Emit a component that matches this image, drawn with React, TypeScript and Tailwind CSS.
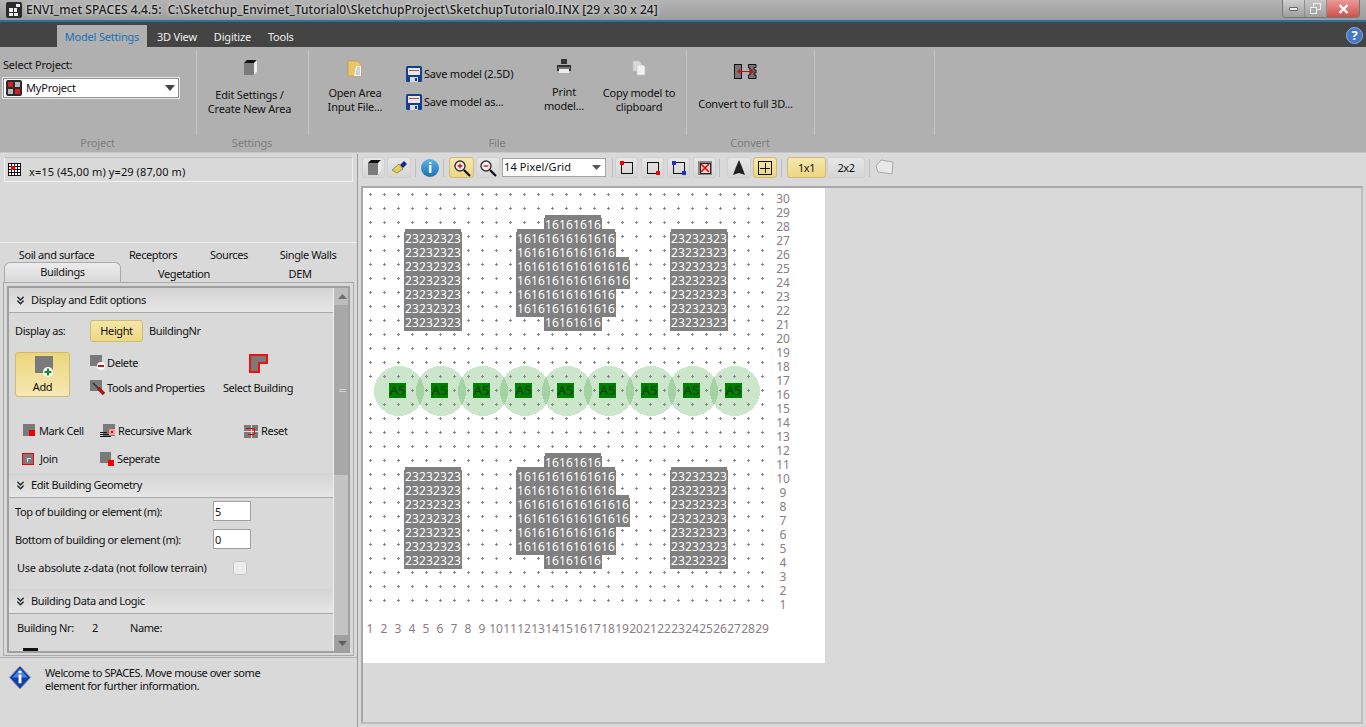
import { ChevronsDown } from "lucide-react";
import { ReactNode } from "react";
import clsx from "clsx";

const FONT = "font-['Noto_Sans',sans-serif]";

// --- little icons ---
const AppLogo = () => (
  <svg width="16" height="16" viewBox="0 0 16 16" className="shrink-0">
    <rect width="16" height="16" rx="2" fill="#2b2b2b" />
    <rect x="3" y="6" width="4" height="4" fill="#eee" />
    <rect x="3" y="11" width="4" height="3" fill="#eee" />
    <rect x="8" y="11" width="4" height="3" fill="#eee" />
    <rect x="8" y="6" width="3" height="4" fill="#eee" />
    <rect x="10" y="2" width="4" height="3" fill="#eee" />
  </svg>
);

const ProjectIcon = () => (
  <svg width="16" height="16" viewBox="0 0 16 16" className="shrink-0">
    <rect width="16" height="16" rx="2" fill="#2b2b2b" />
    <rect x="2" y="2" width="5" height="5" fill="#d62020" />
    <rect x="9" y="2" width="5" height="5" fill="#bbb" />
    <rect x="2" y="9" width="5" height="5" fill="#bbb" />
    <rect x="9" y="9" width="5" height="5" fill="#d62020" />
  </svg>
);

const BoxIcon = ({ size = 16 }: { size?: number }) => (
  <svg width={size} height={size} viewBox="0 0 16 16">
    <path d="M2 3 L5 0 H15 V12 L12 15 H2 Z" fill="#7b7b7b" />
    <path d="M2 3 L5 0 H15 L12 3 Z" fill="#111" />
    <path d="M12 3 L15 0 V12 L12 15 Z" fill="#eee" />
  </svg>
);

const Floppy = () => (
  <svg width="16" height="16" viewBox="0 0 16 16" className="shrink-0">
    <rect width="16" height="16" rx="1.5" fill="#123f8f" />
    <rect x="2" y="2" width="12" height="7" fill="#e8e8e8" />
    <rect x="3" y="4" width="10" height="1" fill="#c05050" />
    <rect x="4" y="11" width="8" height="5" fill="#d8d8d8" />
    <rect x="9" y="12" width="2" height="3" fill="#123f8f" />
  </svg>
);

const FolderDoc = () => (
  <svg width="16" height="18" viewBox="0 0 16 18">
    <path d="M1 2 H10 L14 5 V17 H1 Z" fill="#e9c468" stroke="#b8963e" strokeWidth="0.6" />
    <path d="M9 7 H14 V17 H7 Z" fill="#f3f3f3" />
    <path d="M10 9 H13 M9.5 11 H13 M9 13 H13 M8.5 15 H13" stroke="#999" strokeWidth="0.8" />
  </svg>
);

const Printer = () => (
  <svg width="16" height="16" viewBox="0 0 16 16">
    <path d="M5 1 H11 V6 H5 Z" fill="#333" />
    <path d="M1 7 H15 V13 H1 Z" fill="#333" />
    <rect x="2" y="9" width="12" height="2" fill="#777" />
    <rect x="3" y="11" width="10" height="4" fill="#eee" />
  </svg>
);

const CopyIcon = () => (
  <svg width="14" height="16" viewBox="0 0 14 16">
    <path d="M1 1 H7 L9 3 V11 H1 Z" fill="#d8d8d8" stroke="#c4c4c4" strokeWidth="0.6" />
    <path d="M5 5 H11 L13 7 V15 H5 Z" fill="#f1f1f1" stroke="#c8c8c8" strokeWidth="0.6" />
  </svg>
);

const ConvertIcon = () => (
  <svg width="23" height="15" viewBox="0 0 23 15">
    <rect x="0.5" y="0.5" width="7" height="14" fill="#777" stroke="#111" />
    <path d="M14.5 0.5 H22 V3.5 H20 V6 H22 V9 H20 V11 H22 V14.5 H14.5 V11 H16 V4 H14.5 Z" fill="#777" stroke="#111" />
    <path d="M4 7.5 H19 M6 5.5 L4 7.5 L6 9.5 M17 5.5 L19 7.5 L17 9.5" stroke="#e00000" strokeWidth="1.1" fill="none" />
  </svg>
);

const GridIcon = () => (
  <svg width="13" height="13" viewBox="0 0 13 13" shapeRendering="crispEdges" className="shrink-0">
    <rect x="0" y="0" width="13" height="13" fill="#fff" />
    <path d="M0.5 0 V13 M3.5 0 V13 M6.5 0 V13 M9.5 0 V13 M12.5 0 V13 M0 0.5 H13 M0 3.5 H13 M0 6.5 H13 M0 9.5 H13 M0 12.5 H13" stroke="#111" />
    <rect x="3" y="3" width="4" height="4" fill="#f00000" />
  </svg>
);

const InfoDiamond = () => (
  <svg width="24" height="25" viewBox="0 0 24 26" className="shrink-0">
    <path d="M12 1 L23 13 L12 25 L1 13 Z" fill="#1040b0" stroke="#9a9a9a" />
    <path d="M12 4 L20 13 L12 13 L4 13 Z" fill="#4a80e0" />
    <rect x="10.5" y="10" width="3" height="9" fill="#fff" />
    <rect x="10.5" y="6" width="3" height="2.5" fill="#fff" />
  </svg>
);

const GrayCell = ({ children }: { children?: ReactNode }) => (
  <svg width="17" height="17" viewBox="0 0 17 17" className="shrink-0" shapeRendering="crispEdges">
    <rect x="1" y="1" width="12" height="12" fill="#7a7a7a" />
    {children}
  </svg>
);

function Magnifier({ sign }: { sign: "+" | "-" }) {
  return (
    <svg width="18" height="18" viewBox="0 0 18 18">
      <circle cx="7" cy="7" r="5" fill="#f2f2f2" stroke="#333" strokeWidth="1.4" />
      <path d="M11 11 L17 17" stroke="#111" strokeWidth="2.2" />
      <path d={sign === "+" ? "M4.5 7 H9.5 M7 4.5 V9.5" : "M4.5 7 H9.5"} stroke="#d01010" strokeWidth="1.3" />
    </svg>
  );
}

// --- toolbar bits ---
function TbBtn({ w, active, children }: { w: string; active?: boolean; children?: ReactNode }) {
  return (
    <div
      className={clsx(
        "h-[21px] flex items-center justify-center rounded-[3px] border shrink-0",
        w,
        active
          ? "border-[#cdbb7c] bg-linear-to-b from-[#f6e7ad] to-[#ecd77f]"
          : "border-[#cfcfcf] bg-linear-to-b from-[#e6e6e6] to-[#d6d6d6]"
      )}
    >
      {children}
    </div>
  );
}

const TbSep = ({ cls }: { cls: string }) => <div className={clsx("w-px h-[18px] bg-[#bdbdbd] shrink-0", cls)} />;

const SquareCorner = ({ c1, c2, x, y }: { c1: string; c2?: string; x: number; y: number }) => (
  <svg width="14" height="14" viewBox="0 0 14 14" shapeRendering="crispEdges">
    <rect x="1.5" y="1.5" width="11" height="11" fill="none" stroke="#111" />
    <rect x={x} y={y} width="4" height="4" fill={c1} />
    {c2 && <rect x={10} y={10} width="4" height="4" fill={c2} />}
  </svg>
);

function RibbonGroup({ w, label, children }: { w: string; label?: string; children?: ReactNode }) {
  return (
    <div className={clsx("flex flex-col shrink-0", w)}>
      <div className="h-[86px] mt-[3px] flex border-r border-[#c4c4c4]">{children}</div>
      <div className="h-[17px] flex items-center justify-center pr-[2px] text-[#7e7e7e]">{label}</div>
    </div>
  );
}

function SectionHead({ title }: { title: string }) {
  return (
    <div className="h-[25px] flex items-center pl-[5px] gap-[4px] border-b border-[#a9a9a9] bg-linear-to-b from-[#d4d4d4] to-[#e6e6e6] shrink-0">
      <ChevronsDown size={13} strokeWidth={2.6} color="#222" />
      <span>{title}</span>
    </div>
  );
}

// --- model canvas, coords are relative to the white sheet ---
const X0 = 363;
const Y0 = 188;
const LEFT_ROWS = [239, 253, 267, 281, 295, 309, 323];

function Row({ x, cy, pairs }: { x: number; cy: number; pairs: string[] }) {
  return (
    <div
      className="absolute flex h-[14px] bg-[#808080] text-white text-[12px] leading-[14px] pl-px"
      style={{ left: x - X0, top: cy - 7 - Y0 }}
    >
      {pairs.map((p, i) => (
        <span key={i} className="w-[14px] text-center tracking-[0.1px] last:mr-px">
          {p}
        </span>
      ))}
    </div>
  );
}

const Cap = ({ x, y, w, h = "h-[3px]" }: { x: number; y: number; w: number; h?: string }) => (
  <div className={clsx("absolute bg-[#808080]", h)} style={{ left: x - X0, top: y - Y0, width: w }} />
);

function Block({ dy }: { dy: number }) {
  const p23 = Array(4).fill("23");
  const p16 = (n: number) => Array(n).fill("16");
  return (
    <>
      <Cap x={405} y={229 + dy} w={56} />
      <Cap x={671} y={229 + dy} w={56} />
      <Cap x={404} y={330 + dy} w={58} h="h-px" />
      <Cap x={670} y={330 + dy} w={58} h="h-px" />
      {LEFT_ROWS.map((cy) => (
        <Row key={cy} x={404} cy={cy + dy} pairs={p23} />
      ))}
      {LEFT_ROWS.map((cy) => (
        <Row key={cy} x={670} cy={cy + dy} pairs={p23} />
      ))}
      <Cap x={545} y={215 + dy} w={56} />
      <Cap x={517} y={229 + dy} w={98} />
      <Cap x={616} y={257 + dy} w={13} />
      <Cap x={616} y={288 + dy} w={14} h="h-px" />
      <Cap x={516} y={316 + dy} w={100} h="h-px" />
      <Cap x={544} y={330 + dy} w={58} h="h-px" />
      <Row x={544} cy={225 + dy} pairs={p16(4)} />
      <Row x={516} cy={239 + dy} pairs={p16(7)} />
      <Row x={516} cy={253 + dy} pairs={p16(7)} />
      <Row x={516} cy={267 + dy} pairs={p16(8)} />
      <Row x={516} cy={281 + dy} pairs={p16(8)} />
      <Row x={516} cy={295 + dy} pairs={p16(7)} />
      <Row x={516} cy={309 + dy} pairs={p16(7)} />
      <Row x={544} cy={323 + dy} pairs={p16(4)} />
    </>
  );
}

// plus marks, skipping the cells covered by a building
function DotsLayer() {
  const covered = (x: number, y: number) => {
    const inGroup = (yy: number) =>
      (yy >= 229 && yy < 331 && ((x >= 404 && x < 462) || (x >= 670 && x < 728))) ||
      (yy >= 215 && yy < 331 && x >= 544 && x < 602) ||
      (yy >= 229 && yy < 317 && x >= 516 && x < 616) ||
      (yy >= 257 && yy < 289 && x >= 616 && x < 630);
    return inGroup(y) || inGroup(y - 238) || (y >= 383 && y < 398 && (x - 389) % 42 < 17 && x < 760);
  };
  const marks: string[] = [];
  for (let j = 0; j < 30; j++) {
    for (let i = 0; i < 29; i++) {
      const x = 370 + 14 * i;
      const y = 194 + 14 * j;
      if (covered(x, y)) continue;
      const rx = x - X0;
      const ry = y - Y0;
      marks.push(`M${rx - 1} ${ry + 0.5}h3M${rx + 0.5} ${ry - 1}v3`);
    }
  }
  return (
    <svg width="462" height="475" className="absolute left-0 top-0" shapeRendering="crispEdges">
      <path d={marks.join("")} stroke="#8a8a8a" strokeWidth="1" fill="none" />
    </svg>
  );
}

function ModelSheet() {
  const circles = Array.from({ length: 9 }, (_, i) => i);
  const rows = Array.from({ length: 30 }, (_, i) => 30 - i);
  const cols = Array.from({ length: 29 }, (_, i) => i + 1);
  return (
    <div className="relative w-[462px] h-[475px] bg-white shrink-0 overflow-hidden text-[12px] tracking-normal">
      <Block dy={0} />
      <Block dy={238} />
      <svg width="462" height="475" className="absolute left-0 top-0" shapeRendering="crispEdges">
        {circles.map((i) => (
          <circle key={i} cx={36 + 42 * i} cy={203} r={25} fill="#008000" fillOpacity="0.2" />
        ))}
      </svg>
      <DotsLayer />
      {circles.map((i) => (
        <div
          key={i}
          className="absolute w-[17px] h-[15px] bg-[#008000] text-[#003c00] text-[13px] leading-[15px] text-center"
          style={{ left: 26 + 42 * i, top: 195 }}
        >
          A5
        </div>
      ))}
      {rows.map((n, i) => (
        <div
          key={n}
          className="absolute w-[14px] h-[14px] leading-[14px] text-center text-[#8b7c84]"
          style={{ left: 413, top: 4 + 14 * i }}
        >
          {n}
        </div>
      ))}
      <div className="absolute left-0 top-[434px] flex text-[#8b7c84]">
        {cols.map((n) => (
          <div key={n} className="w-[14px] h-[14px] leading-[14px] text-center">
            {n}
          </div>
        ))}
      </div>
    </div>
  );
}

export default function App() {
  return (
    <div className={clsx("w-[1366px] h-[727px] overflow-hidden bg-[#d9d9d9] text-[11px] tracking-[-0.4px] text-[#111] flex flex-col", FONT)}>
      {/* title bar */}
      <div className="h-[20px] flex items-start bg-linear-to-b from-[#b4b4b4] to-[#9c9c9c] shrink-0">
        <div className="pl-[6px] pt-[2px] flex items-center gap-[4px]">
          <AppLogo />
          <span className="text-[12px] tracking-[0.06px] leading-[16px] text-[#1b1b1b] font-medium [text-shadow:0_0_4px_#fff] whitespace-pre">
            {"ENVI_met SPACES 4.4.5:  C:\\Sketchup_Envimet_Tutorial0\\SketchupProject\\SketchupTutorial0.INX [29 x 30 x 24]"}
          </span>
        </div>
        <div className="ml-auto mr-[6px] flex h-[18px] rounded-b-[4px] overflow-hidden border border-t-0 border-[#777]">
          <div className="w-[22px] flex items-center justify-center bg-linear-to-b from-[#cfcfcf] to-[#9d9d9d] border-r border-[#8d8d8d]">
            <div className="w-[9px] h-[4px] bg-[#eee] border border-[#666] rounded-[1px]" />
          </div>
          <div className="w-[22px] flex items-center justify-center bg-linear-to-b from-[#c8c8c8] to-[#9d9d9d] border-r border-[#8d8d8d]">
            <svg width="11" height="11" viewBox="0 0 11 11">
              <rect x="3.5" y="0.5" width="7" height="6" fill="none" stroke="#eee" />
              <rect x="0.5" y="4.5" width="6" height="6" fill="#aaa" stroke="#eee" />
            </svg>
          </div>
          <div className="w-[32px] flex items-center justify-center bg-linear-to-b from-[#e99a98] to-[#cf4f4c]">
            <svg width="11" height="10" viewBox="0 0 11 10">
              <path d="M1.5 1 L9.5 9 M9.5 1 L1.5 9" stroke="#fff" strokeWidth="2.4" />
            </svg>
          </div>
        </div>
      </div>
      <div className="h-[2px] bg-[#2f6f9c] shrink-0" />

      {/* menu tabs */}
      <div className="h-[25px] bg-[#444444] flex items-end shrink-0 text-[#eeeeee] tracking-[-0.2px]">
        <div className="ml-[57px] w-[90px] h-[22px] pt-[2px] bg-[#b0b0b0] text-[#1670b8] flex items-center justify-center">
          Model Settings
        </div>
        <div className="ml-[10px] h-[22px] pt-[2px] flex items-center">3D View</div>
        <div className="ml-[17px] h-[22px] pt-[2px] flex items-center">Digitize</div>
        <div className="ml-[17px] h-[22px] pt-[2px] flex items-center">Tools</div>
        <div className="ml-auto mr-[3px] mb-[3px] w-[17px] h-[17px] rounded-full bg-[#4478c8] border border-[#8fb0e4] text-white font-bold text-[13px] leading-[15px] text-center">
          ?
        </div>
      </div>

      {/* ribbon */}
      <div className="h-[106px] bg-[#b0b0b0] flex shrink-0 border-b border-[#c6c6c6] tracking-[-0.2px]">
        <RibbonGroup w="w-[197px]" label="Project">
          <div className="pl-[3px] pt-[8px]">
            <div className="leading-[14px]">Select Project:</div>
            <div className="mt-[6px] w-[176px] h-[20px] bg-white border border-[#8f8f8f] outline outline-[#e8e8e8] flex items-center pl-[2px] gap-[4px]">
              <ProjectIcon />
              <span>MyProject</span>
              <svg width="10" height="6" viewBox="0 0 10 6" className="ml-auto mr-[3px]">
                <path d="M0 0 H10 L5 6 Z" fill="#444" />
              </svg>
            </div>
          </div>
        </RibbonGroup>

        <RibbonGroup w="w-[112px]" label="Settings">
          <div className="w-full flex flex-col items-center pt-[10px] pr-[6px]">
            <BoxIcon />
            <div className="mt-[12px] text-center leading-[14px]">
              Edit Settings /<br />
              Create New Area
            </div>
          </div>
        </RibbonGroup>

        <RibbonGroup w="w-[378px]" label="File">
          <div className="w-[90px] flex flex-col items-center pt-[9px] pl-[2px]">
            <FolderDoc />
            <div className="mt-[9px] text-center leading-[14px]">
              Open Area<br />
              Input File...
            </div>
          </div>
          <div className="w-[120px] pl-[7px] pt-[16px] flex flex-col gap-[12px]">
            <div className="flex items-center gap-[2px] h-[16px]">
              <Floppy />
              <span>Save model (2.5D)</span>
            </div>
            <div className="flex items-center gap-[2px] h-[16px]">
              <Floppy />
              <span>Save model as...</span>
            </div>
          </div>
          <div className="w-[60px] ml-[15px] flex flex-col items-center pt-[8px]">
            <Printer />
            <div className="mt-[11px] text-center leading-[14px]">
              Print<br />
              model...
            </div>
          </div>
          <div className="w-[90px] flex flex-col items-center pt-[10px]">
            <CopyIcon />
            <div className="mt-[10px] text-center leading-[14px]">
              Copy model to<br />
              clipboard
            </div>
          </div>
        </RibbonGroup>

        <RibbonGroup w="w-[128px]" label="Convert">
          <div className="w-full flex flex-col items-center pt-[14px] pr-[10px]">
            <ConvertIcon />
            <div className="mt-[18px] leading-[14px]">Convert to full 3D...</div>
          </div>
        </RibbonGroup>

        <RibbonGroup w="w-[120px]" />
      </div>

      {/* work area */}
      <div className="flex-1 flex min-h-0 pt-[1px]">
        <div className="w-[358px] shrink-0 flex flex-col border-r border-[#9a9a9a]">
          <div className="mx-[4px] mt-[3px] h-[25px] border border-[#f0f0f0] border-t-[#bdbdbd] flex items-start pt-[5px] pl-[3px] gap-[8px] shrink-0">
            <GridIcon />
            <span className="mt-[2px] leading-[14px] tracking-[0.1px]">x=15 (45,00 m) y=29 (87,00 m)</span>
          </div>
          <div className="mt-[60px] h-px bg-[#efefef] shrink-0" />

          {/* tabs */}
          <div className="flex h-[15px] mt-[5px] items-center text-center shrink-0">
            <div className="w-[113px]">Soil and surface</div>
            <div className="w-[80px]">Receptors</div>
            <div className="w-[72px]">Sources</div>
            <div className="w-[86px]">Single Walls</div>
          </div>
          <div className="flex h-[19px] items-end text-center shrink-0 relative z-10">
            <div className="ml-[4px] w-[117px] h-[20px] rounded-t-[6px] border border-b-0 border-[#a9a9a9] bg-linear-to-b from-[#ececec] to-[#d9d9d9] leading-[18px]">
              Buildings
            </div>
            <div className="w-[126px] h-[19px] leading-[21px]">Vegetation</div>
            <div className="w-[106px] h-[19px] leading-[21px]">DEM</div>
          </div>

          <div className="mx-[3px] h-[374px] border border-[#a9a9a9] p-[3px] shrink-0">
            <div className="h-[367px] border-2 border-[#9f9f9f] flex overflow-hidden">
              {/* accordion */}
              <div className="w-[325px] flex flex-col overflow-hidden border-r border-[#f0f0f0] shrink-0">
                <SectionHead title="Display and Edit options" />
                <div className="h-[160px] flex flex-col shrink-0">
                  <div className="flex items-center h-[22px] mt-[7px] pl-[6px]">
                    <span className="w-[75px]">Display as:</span>
                    <div className="w-[53px] h-[22px] rounded-[3px] border border-[#cdbb7c] bg-linear-to-b from-[#f5e6a8] to-[#eed983] flex items-center justify-center">
                      Height
                    </div>
                    <span className="ml-[6px]">BuildingNr</span>
                  </div>
                  <div className="flex mt-[10px] pl-[6px]">
                    <div className="w-[55px] h-[45px] rounded-[3px] border border-[#cdbb7c] bg-linear-to-b from-[#edd679] to-[#f5e8b4] flex flex-col items-center pt-[3px] shrink-0">
                      <svg width="22" height="21" viewBox="0 0 22 21">
                        <rect x="3" y="0" width="18" height="17" fill="#7a7a7a" />
                        <circle cx="16" cy="16" r="5" fill="#fff" />
                        <path d="M16 12.5 V19.5 M12.5 16 H19.5" stroke="#1a8a2a" strokeWidth="2" />
                      </svg>
                      <span className="leading-[14px] mt-[3px]">Add</span>
                    </div>
                    <div className="w-[128px] ml-[20px] flex flex-col shrink-0">
                      <div className="flex items-center h-[20px] mt-[1px]">
                        <svg width="16" height="16" viewBox="0 0 16 16" className="shrink-0">
                          <rect x="0" y="0" width="12" height="11" fill="#7a7a7a" />
                          <circle cx="11" cy="11" r="4" fill="#fff" />
                          <rect x="8" y="10" width="6" height="2" fill="#d01010" />
                        </svg>
                        <span className="ml-[1px]">Delete</span>
                      </div>
                      <div className="flex items-center h-[20px] mt-[5px]">
                        <svg width="16" height="16" viewBox="0 0 16 16" className="shrink-0">
                          <rect x="0" y="0" width="12" height="11" fill="#7a7a7a" />
                          <path d="M3 3 L8 8" stroke="#333" strokeWidth="1.4" />
                          <path d="M8 8 L14 14" stroke="#a01818" strokeWidth="3.4" />
                        </svg>
                        <span className="ml-[1px]">Tools and Properties</span>
                      </div>
                    </div>
                    <div className="w-[80px] flex flex-col items-center">
                      <svg width="19" height="19" viewBox="0 0 19 19" shapeRendering="crispEdges" className="mt-[2px]">
                        <path d="M1 1 H18 V9 H10 V18 H1 Z" fill="#7a7a7a" stroke="#f01010" strokeWidth="2" />
                      </svg>
                      <span className="leading-[14px] mt-[8px]">Select Building</span>
                    </div>
                  </div>
                  <div className="flex mt-[25px] h-[16px] items-center pl-[13px]">
                    <div className="w-[78px] flex items-center">
                      <GrayCell>
                        <rect x="7" y="7" width="6" height="6" fill="#f00000" />
                      </GrayCell>
                      <span>Mark Cell</span>
                    </div>
                    <div className="w-[144px] flex items-center gap-[2px]">
                      <svg width="16" height="14" viewBox="0 0 16 14" className="shrink-0" shapeRendering="crispEdges">
                        <rect x="3" y="0" width="12" height="12" fill="#7a7a7a" />
                        <rect x="9" y="5" width="6" height="6" fill="#ff9a9a" />
                        <rect x="11" y="7" width="2" height="2" fill="#e00000" />
                        <path d="M0 8.5 H7 M0 10.5 H9 M0 12.5 H11" stroke="#111" />
                      </svg>
                      <span>Recursive Mark</span>
                    </div>
                    <div className="flex items-center gap-[3px]">
                      <svg width="14" height="13" viewBox="0 0 14 13" className="shrink-0" shapeRendering="crispEdges">
                        <rect width="14" height="13" fill="#7a7a7a" />
                        <path d="M7 0 V13 M0 6.5 H14" stroke="#ddd" />
                        <path d="M1.5 3.5 H10.5 V9.5 H3.5" fill="none" stroke="#f00000" strokeWidth="1.4" />
                      </svg>
                      <span>Reset</span>
                    </div>
                  </div>
                  <div className="flex mt-[12px] h-[16px] items-center pl-[13px]">
                    <div className="w-[78px] flex items-center gap-[6px]">
                      <svg width="12" height="12" viewBox="0 0 12 12" className="shrink-0" shapeRendering="crispEdges">
                        <rect x="0.5" y="0.5" width="11" height="11" fill="#7a7a7a" stroke="#f00000" />
                        <path d="M5.5 9 V5.5 H9" fill="none" stroke="#eee" />
                      </svg>
                      <span>Join</span>
                    </div>
                    <div className="flex items-center gap-[3px]">
                      <svg width="14" height="14" viewBox="0 0 14 14" className="shrink-0" shapeRendering="crispEdges">
                        <rect width="11" height="11" fill="#7a7a7a" />
                        <rect x="8" y="8" width="6" height="6" fill="#f00000" />
                      </svg>
                      <span>Seperate</span>
                    </div>
                  </div>
                </div>

                <SectionHead title="Edit Building Geometry" />
                <div className="h-[91px] flex flex-col shrink-0 pl-[6px]">
                  <div className="flex items-center h-[20px] mt-[3px]">
                    <span className="w-[198px] pt-[2px]">Top of building or element (m):</span>
                    <input readOnly value="5" className="w-[38px] h-[20px] bg-white border border-[#9f9f9f] pl-[1px] outline-none text-[11px]" />
                  </div>
                  <div className="flex items-center h-[20px] mt-[8px]">
                    <span className="w-[198px] pt-[2px]">Bottom of building or element (m):</span>
                    <input readOnly value="0" className="w-[38px] h-[20px] bg-white border border-[#9f9f9f] pl-[1px] outline-none text-[11px]" />
                  </div>
                  <div className="flex items-center h-[14px] mt-[12px] pl-[2px]">
                    <span className="w-[216px] tracking-[-0.27px]">Use absolute z-data (not follow terrain)</span>
                    <div className="w-[14px] h-[14px] rounded-[3px] border border-[#c8c8c8] bg-[#ececec]" />
                  </div>
                </div>

                <SectionHead title="Building Data and Logic" />
                <div className="flex items-center h-[14px] mt-[7px] pl-[8px] shrink-0">
                  <span className="w-[75px]">Building Nr:</span>
                  <span className="w-[38px]">2</span>
                  <span>Name:</span>
                </div>
                <div className="mt-[13px] ml-[14px] w-[15px] h-[6px] bg-[#111] border-b-2 border-[#e00000] shrink-0" />
              </div>
              {/* scrollbar */}
              <div className="w-[16px] flex flex-col bg-[#c4c4c4] shrink-0">
                <div className="h-[17px] bg-[#bdbdbd] flex items-center justify-center">
                  <svg width="9" height="5" viewBox="0 0 9 5">
                    <path d="M0 5 H9 L4.5 0 Z" fill="#6f6f6f" />
                  </svg>
                </div>
                <div className="h-[170px] bg-[#a8a8a8] flex flex-col items-center justify-center gap-[1px]">
                  <div className="w-[7px] h-px bg-[#d0d0d0]" />
                  <div className="w-[7px] h-px bg-[#d0d0d0]" />
                </div>
                <div className="flex-1" />
                <div className="h-[16px] bg-[#a0a0a0] flex items-center justify-center">
                  <svg width="9" height="5" viewBox="0 0 9 5">
                    <path d="M0 0 H9 L4.5 5 Z" fill="#5f5f5f" />
                  </svg>
                </div>
              </div>
            </div>
          </div>

          {/* status */}
          <div className="flex-1 mt-px border-t border-[#b2b2b2] flex pl-[8px] pt-[7px]">
            <InfoDiamond />
            <div className="ml-[13px] leading-[13px] pt-[1px]">
              Welcome to SPACES. Move mouse over some
              <br />
              element for further information.
            </div>
          </div>
        </div>

        {/* right side */}
        <div className="flex-1 flex flex-col min-w-0">
          <div className="h-[32px] flex items-center pl-[4px] pb-[5px] shrink-0">
            <TbBtn w="w-[23px]">
              <BoxIcon />
            </TbBtn>
            <TbBtn w="w-[24px] ml-[2px]">
              <svg width="18" height="17" viewBox="0 0 18 17">
                <path d="M10 6 L14 2 L17 5 L13 9 Z" fill="#1a2a80" />
                <path d="M2 11 L9 5 L13 10 L7 14 Z" fill="#e8d050" stroke="#555" strokeWidth="0.6" />
                <path d="M1 15 H8" stroke="#e8e070" strokeWidth="1.4" strokeDasharray="1 1" />
              </svg>
            </TbBtn>
            <TbSep cls="ml-[4px]" />
            <div className="ml-[5px] w-[18px] h-[18px] rounded-full bg-linear-to-b from-[#5db2e8] to-[#1670b8] text-white font-bold text-[14px] leading-[18px] text-center shrink-0">
              i
            </div>
            <TbSep cls="ml-[4px]" />
            <TbBtn w="w-[25px] ml-[5px]" active>
              <Magnifier sign="+" />
            </TbBtn>
            <TbBtn w="w-[24px] ml-[2px]">
              <Magnifier sign="-" />
            </TbBtn>
            <div className="ml-[2px] w-[104px] h-[19px] bg-white border border-[#a4a4a4] flex items-center pl-[1px] shrink-0 tracking-[0.1px]">
              14 Pixel/Grid
              <svg width="9" height="5" viewBox="0 0 9 5" className="ml-auto mr-[4px]">
                <path d="M0 0 H9 L4.5 5 Z" fill="#555" />
              </svg>
            </div>
            <TbSep cls="ml-[6px]" />
            <TbBtn w="w-[23px] ml-[2px]">
              <SquareCorner c1="#f00000" x={0} y={0} />
            </TbBtn>
            <TbBtn w="w-[23px] ml-[3px]">
              <SquareCorner c1="#f00000" x={10} y={10} />
            </TbBtn>
            <TbBtn w="w-[23px] ml-[3px]">
              <SquareCorner c1="#2030c0" c2="#2030c0" x={0} y={0} />
            </TbBtn>
            <TbBtn w="w-[23px] ml-[3px]">
              <svg width="14" height="14" viewBox="0 0 14 14" shapeRendering="crispEdges">
                <rect x="0" y="0" width="14" height="14" fill="#888" />
                <rect x="2" y="2" width="10" height="10" fill="#f3d6d6" stroke="#222" />
                <path d="M3 3 L11 11 M11 3 L3 11" stroke="#f00000" strokeWidth="1.6" shapeRendering="auto" />
              </svg>
            </TbBtn>
            <TbSep cls="ml-[3px]" />
            <TbBtn w="w-[24px] ml-[7px]">
              <svg width="12" height="16" viewBox="0 0 12 16">
                <path d="M6 0 L9 7 L12 15 L6 13 L0 15 L3 7 Z" fill="#222" />
              </svg>
            </TbBtn>
            <TbBtn w="w-[24px] ml-[2px]" active>
              <svg width="14" height="14" viewBox="0 0 14 14" shapeRendering="crispEdges">
                <rect x="0.5" y="0.5" width="13" height="13" fill="none" stroke="#111" />
                <path d="M7 2 V12 M2 7 H12" stroke="#111" />
              </svg>
            </TbBtn>
            <TbSep cls="ml-[4px]" />
            <TbBtn w="w-[39px] ml-[5px] pt-[2px]" active>
              1x1
            </TbBtn>
            <TbBtn w="w-[38px] ml-px pt-[2px]">2x2</TbBtn>
            <TbSep cls="ml-[4px]" />
            <div className="ml-[5px] shrink-0">
              <svg width="20" height="17" viewBox="0 0 20 17">
                <path d="M6 1 L18 3 L17 15 L3 13 L1 7 Z" fill="#e8e8e8" stroke="#a8a8a8" />
              </svg>
            </div>
          </div>
          <div className="h-[538px] mx-[3px] border-2 border-[#a8a8a8] border-r-[#bdbdbd] border-b-[#bdbdbd]">
            <ModelSheet />
          </div>
        </div>
      </div>
    </div>
  );
}
